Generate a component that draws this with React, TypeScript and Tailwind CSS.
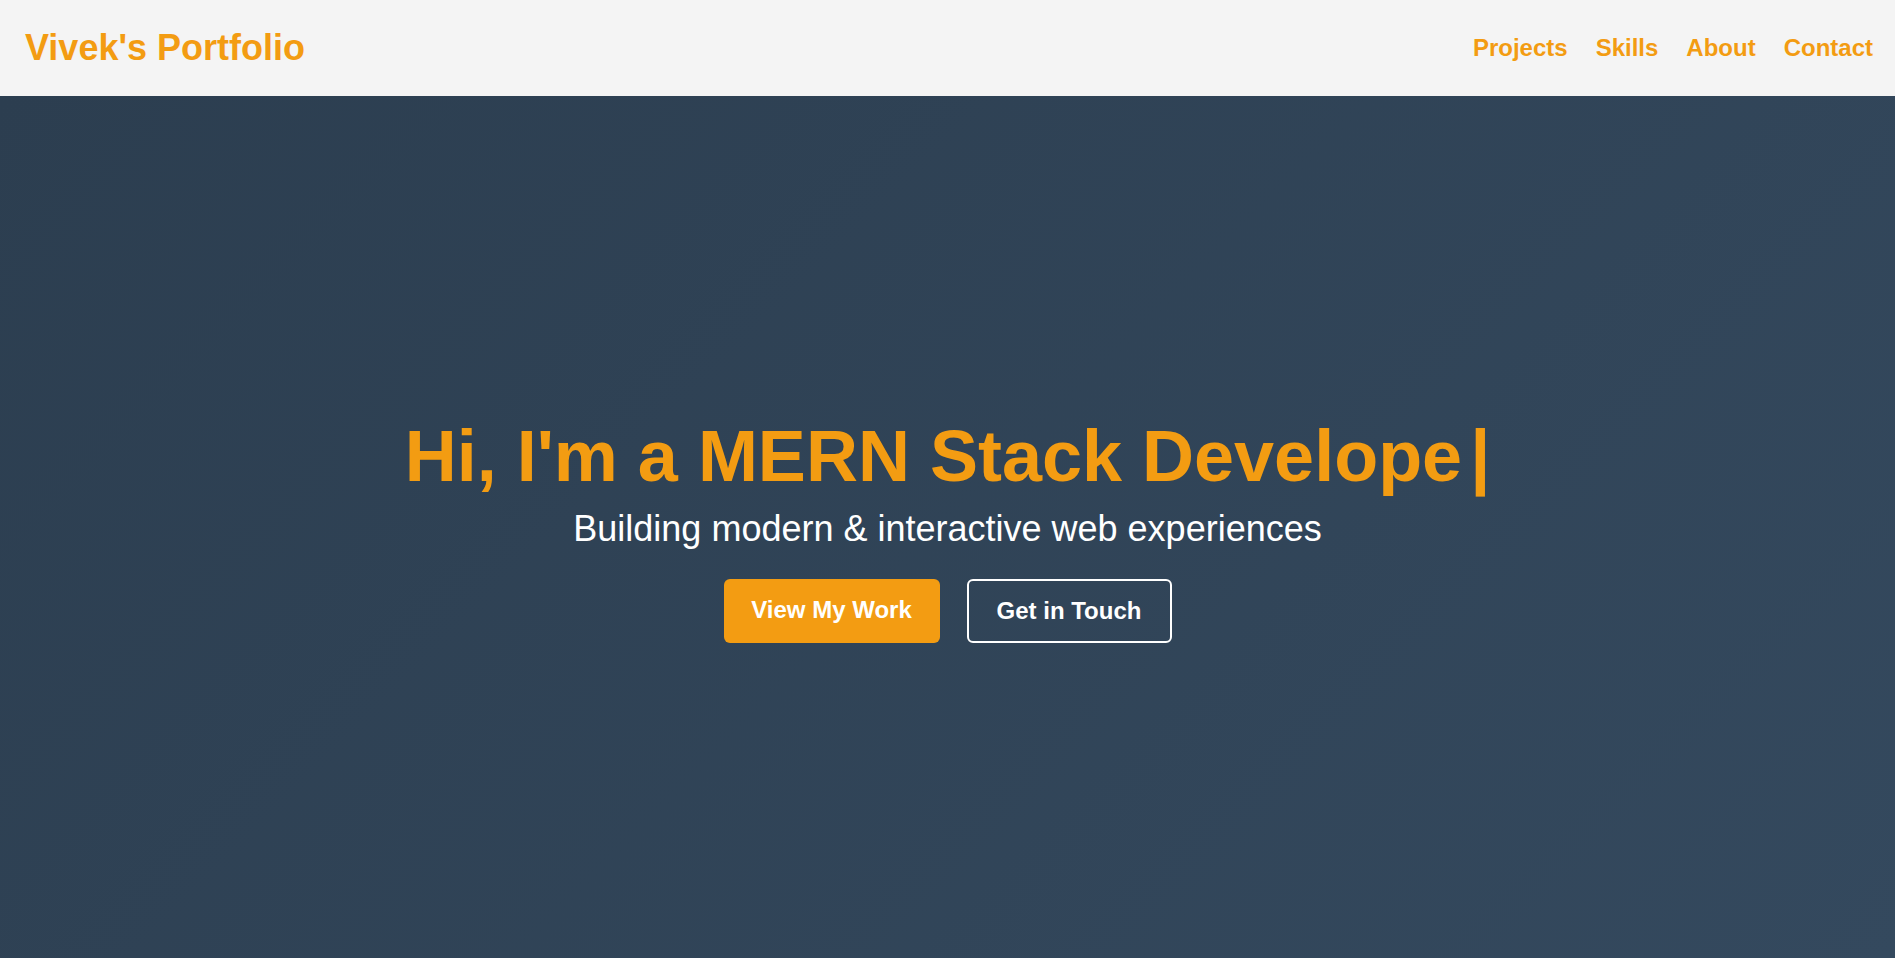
import React from 'react'

const links = ['Projects', 'Skills', 'About', 'Contact']

const Header: React.FC = () => {
  return (
    <header className="h-24 bg-[#f4f4f4] flex items-center justify-between pl-[25px] pr-[22px]">
      <h1 className="text-[36px] font-bold text-[#f39c12] leading-none">Vivek's Portfolio</h1>
      <nav className="flex items-center gap-7">
        {links.map((l) => (
          <a key={l} href={`#${l.toLowerCase()}`} className="text-2xl font-bold text-[#f39c12] leading-none">
            {l}
          </a>
        ))}
      </nav>
    </header>
  )
}

const Hero: React.FC = () => {
  return (
    <main className="flex-1 flex flex-col items-center justify-center text-center bg-[linear-gradient(135deg,#2c3e50,#34495e)] pt-[9px]">
      <h2 className="text-[72px] font-bold leading-none text-[#f39c12]">
        Hi, I'm a MERN Stack Develope<span className="ml-2">|</span>
      </h2>
      <p className="mt-[17px] text-4xl text-white">Building modern &amp; interactive web experiences</p>
      <div className="mt-[30px] flex items-center gap-[27px]">
        <a href="#projects" className="h-16 w-[216px] flex items-center justify-center rounded-md bg-[#f39c12] text-2xl font-bold text-white pb-[2px]">
          View My Work
        </a>
        <a href="#contact" className="h-16 w-[205px] flex items-center justify-center rounded-md border-2 border-white text-2xl font-bold text-white">
          Get in Touch
        </a>
      </div>
    </main>
  )
}

export default function App() {
  return (
    <div className="h-screen flex flex-col font-['Liberation_Sans',Arial,sans-serif]">
      <Header />
      <Hero />
    </div>
  )
}
